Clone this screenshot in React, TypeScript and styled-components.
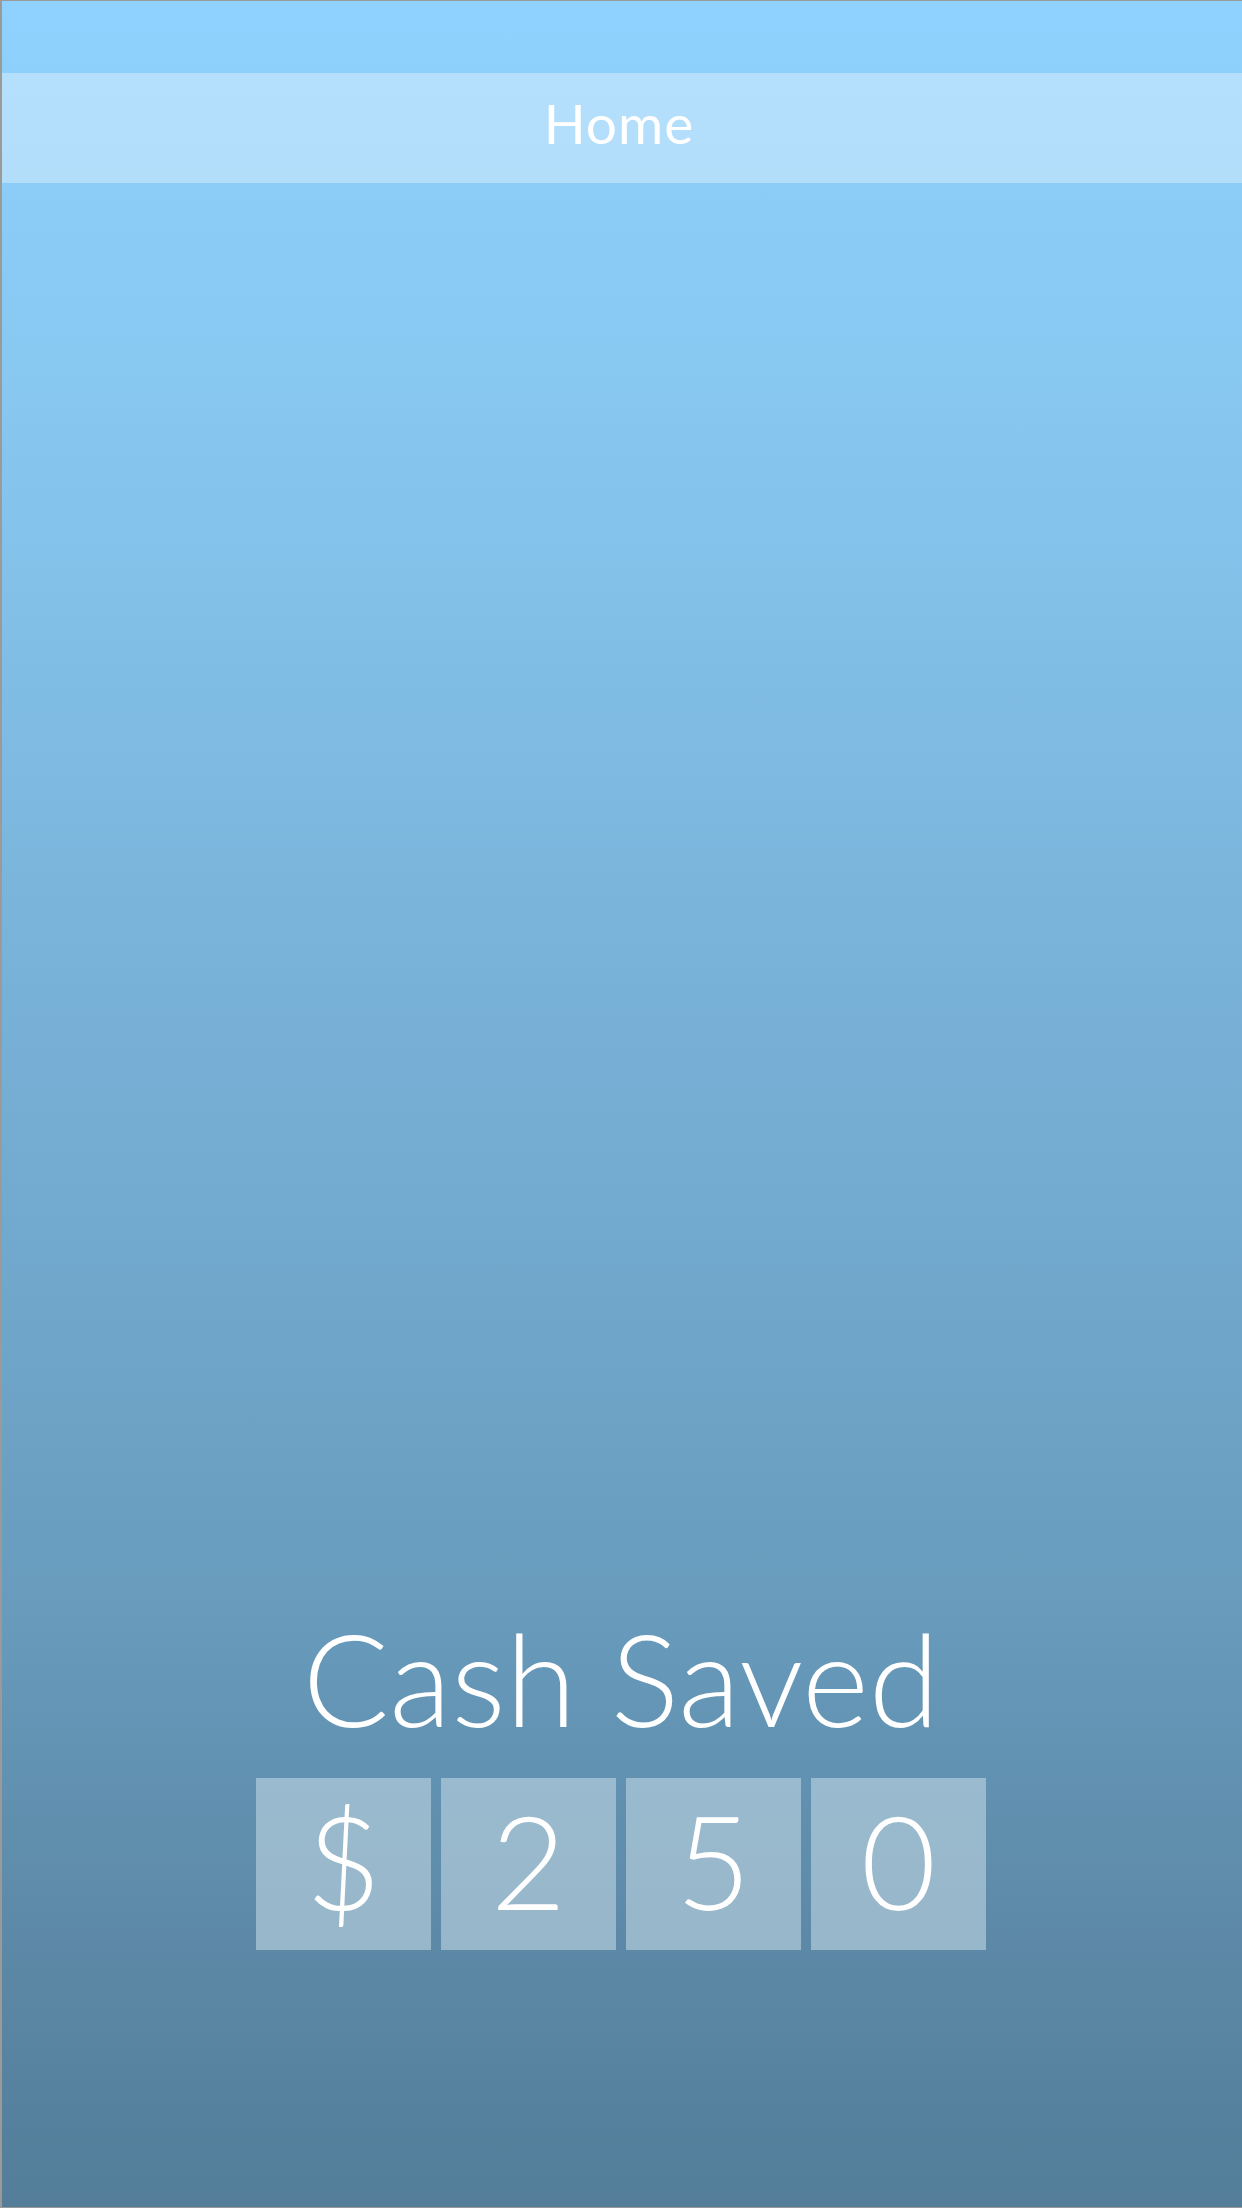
import React from "react";
import styled, { createGlobalStyle } from "styled-components";

const GlobalStyle = createGlobalStyle`
  html, body {
    margin: 0;
    padding: 0;
  }
  body {
    font-family: "Lato", "Open Sans", sans-serif;
  }
  * { box-sizing: border-box; }
`;

const Page = styled.div`
  width: 1242px;
  min-height: 2208px;
  display: flex;
  flex-direction: column;
  background: linear-gradient(180deg, #8fd2ff 0%, #86c6ee 20%, #78b1d8 45%, #6a9ec0 70%, #5d8aa8 87%, #537d99 100%);
  border-top: 1px solid #9a9a9a;
  border-left: 2px solid #9a9a9a;
  border-bottom: 1px solid #9a9a9a;
`;

const StatusArea = styled.div`
  height: 72px;
  flex: none;
`;

const NavBar = styled.header`
  height: 110px;
  flex: none;
  display: flex;
  align-items: center;
  justify-content: center;
  background: rgba(255, 255, 255, 0.34);
`;

const NavTitle = styled.h1`
  margin: 0;
  font-family: "Lato", sans-serif;
  font-weight: 400;
  font-size: 55px;
  line-height: 1;
  color: #ffffff;
  letter-spacing: 1px;
  transform: translate(-3px, -5px);
`;

const Spacer = styled.div`
  flex: 1;
`;

const Summary = styled.section`
  display: flex;
  flex-direction: column;
  align-items: center;
  padding-bottom: 257px;
  transform: translateX(-1px);
`;

const SummaryTitle = styled.h2`
  margin: 0 0 36px;
  font-family: "Lato", sans-serif;
  font-weight: 300;
  font-size: 128px;
  line-height: 1;
  color: #ffffff;
  letter-spacing: 0px;
`;

const DigitRow = styled.div`
  display: flex;
  gap: 10px;
`;

const DigitTile = styled.div`
  width: 175px;
  height: 172px;
  display: flex;
  align-items: center;
  justify-content: center;
  background: rgba(200, 220, 232, 0.55);
  font-family: "Lato", sans-serif;
  font-weight: 300;
  font-size: 130px;
  line-height: 1;
  color: #ffffff;
  padding-bottom: 8px;
`;

const digits = ["$", "2", "5", "0"];

export default function App() {
  return (
    <>
      <GlobalStyle />
      <Page>
        <StatusArea />
        <NavBar>
          <NavTitle>Home</NavTitle>
        </NavBar>
        <Spacer />
        <Summary>
          <SummaryTitle>Cash Saved</SummaryTitle>
          <DigitRow>
            {digits.map((d, i) => (
              <DigitTile key={i}>{d}</DigitTile>
            ))}
          </DigitRow>
        </Summary>
      </Page>
    </>
  );
}
